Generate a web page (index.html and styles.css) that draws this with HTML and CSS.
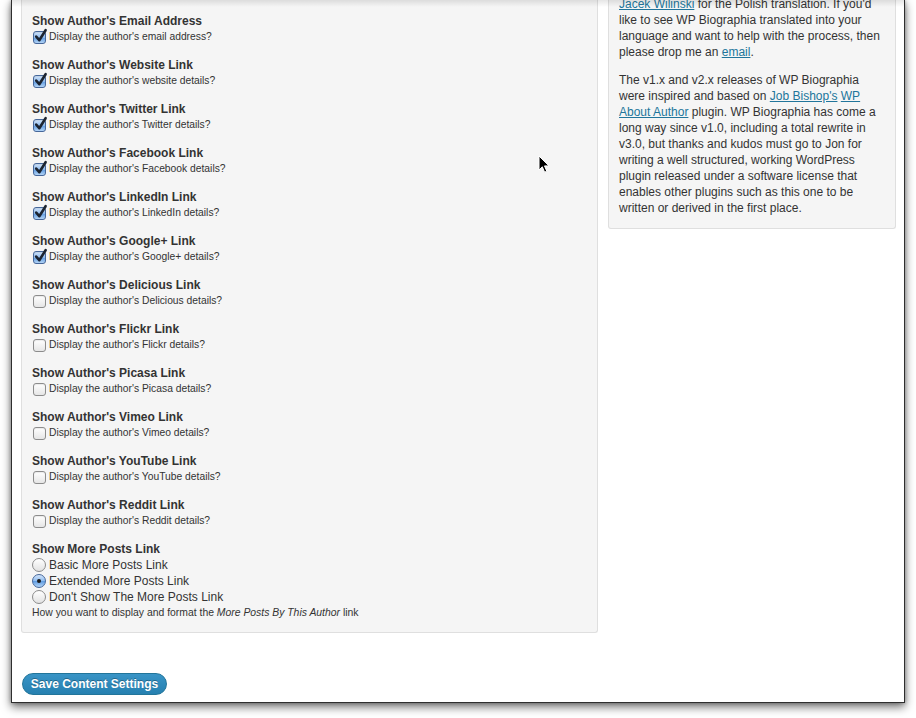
FILE: index.html
```html
<!DOCTYPE html>
<html>
<head>
<meta charset="utf-8">
<link rel="stylesheet" href="styles.css">
</head>
<body>
<div class="desktop">
  <div class="window">
    <div class="columns">
      <div class="mainbox">
        <div class="field">
          <h4>Show Author's Email Address</h4>
          <label class="opt"><span class="cb on"><svg viewBox="0 0 15 16" width="15" height="16"><path d="M3.2 8.6 L6.3 12.2 L12.6 2.2" fill="none" stroke="#1c2430" stroke-width="2.6" stroke-linecap="round" stroke-linejoin="round"/></svg></span>Display the author's email address?</label>
        </div>
        <div class="field">
          <h4>Show Author's Website Link</h4>
          <label class="opt"><span class="cb on"><svg viewBox="0 0 15 16" width="15" height="16"><path d="M3.2 8.6 L6.3 12.2 L12.6 2.2" fill="none" stroke="#1c2430" stroke-width="2.6" stroke-linecap="round" stroke-linejoin="round"/></svg></span>Display the author's website details?</label>
        </div>
        <div class="field">
          <h4>Show Author's Twitter Link</h4>
          <label class="opt"><span class="cb on"><svg viewBox="0 0 15 16" width="15" height="16"><path d="M3.2 8.6 L6.3 12.2 L12.6 2.2" fill="none" stroke="#1c2430" stroke-width="2.6" stroke-linecap="round" stroke-linejoin="round"/></svg></span>Display the author's Twitter details?</label>
        </div>
        <div class="field">
          <h4>Show Author's Facebook Link</h4>
          <label class="opt"><span class="cb on"><svg viewBox="0 0 15 16" width="15" height="16"><path d="M3.2 8.6 L6.3 12.2 L12.6 2.2" fill="none" stroke="#1c2430" stroke-width="2.6" stroke-linecap="round" stroke-linejoin="round"/></svg></span>Display the author's Facebook details?</label>
        </div>
        <div class="field">
          <h4>Show Author's LinkedIn Link</h4>
          <label class="opt"><span class="cb on"><svg viewBox="0 0 15 16" width="15" height="16"><path d="M3.2 8.6 L6.3 12.2 L12.6 2.2" fill="none" stroke="#1c2430" stroke-width="2.6" stroke-linecap="round" stroke-linejoin="round"/></svg></span>Display the author's LinkedIn details?</label>
        </div>
        <div class="field">
          <h4>Show Author's Google+ Link</h4>
          <label class="opt"><span class="cb on"><svg viewBox="0 0 15 16" width="15" height="16"><path d="M3.2 8.6 L6.3 12.2 L12.6 2.2" fill="none" stroke="#1c2430" stroke-width="2.6" stroke-linecap="round" stroke-linejoin="round"/></svg></span>Display the author's Google+ details?</label>
        </div>
        <div class="field">
          <h4>Show Author's Delicious Link</h4>
          <label class="opt"><span class="cb"></span>Display the author's Delicious details?</label>
        </div>
        <div class="field">
          <h4>Show Author's Flickr Link</h4>
          <label class="opt"><span class="cb"></span>Display the author's Flickr details?</label>
        </div>
        <div class="field">
          <h4>Show Author's Picasa Link</h4>
          <label class="opt"><span class="cb"></span>Display the author's Picasa details?</label>
        </div>
        <div class="field">
          <h4>Show Author's Vimeo Link</h4>
          <label class="opt"><span class="cb"></span>Display the author's Vimeo details?</label>
        </div>
        <div class="field">
          <h4>Show Author's YouTube Link</h4>
          <label class="opt"><span class="cb"></span>Display the author's YouTube details?</label>
        </div>
        <div class="field">
          <h4>Show Author's Reddit Link</h4>
          <label class="opt"><span class="cb"></span>Display the author's Reddit details?</label>
        </div>
        <div class="field last">
          <h4>Show More Posts Link</h4>
          <label class="opt radio-row"><span class="rb"></span>Basic More Posts Link</label>
          <label class="opt radio-row"><span class="rb on"></span>Extended More Posts Link</label>
          <label class="opt radio-row"><span class="rb"></span>Don't Show The More Posts Link</label>
          <div class="help">How you want to display and format the <em>More Posts By This Author</em> link</div>
        </div>
      </div>
      <div class="sidebox">
        <p class="first"><a href="#">Jacek Wilinski</a> for the Polish translation. If you'd like to see WP Biographia translated into your language and want to help with the process, then please drop me an <a href="#">email</a>.</p>
        <p>The v1.x and v2.x releases of WP Biographia were inspired and based on <a href="#">Job Bishop's</a> <a href="#">WP About Author</a> plugin. WP Biographia has come a long way since v1.0, including a total rewrite in v3.0, but thanks and kudos must go to Jon for writing a well structured, working WordPress plugin released under a software license that enables other plugins such as this one to be written or derived in the first place.</p>
      </div>
    </div>
    <div class="actions">
      <button class="save">Save Content Settings</button>
    </div>
    <svg class="cursor" width="12" height="19" viewBox="0 0 12 19"><path d="M1 1 L1 15 L4.3 11.8 L6.6 17.2 L8.8 16.2 L6.5 10.9 L11 10.9 Z" fill="#000" stroke="#fff" stroke-width="1"/></svg>
    <div class="topshade"></div>
  </div>
</div>
</body>
</html>
```

FILE: styles.css
```css
html, body {
  margin: 0;
  padding: 0;
  background: #ffffff;
}

.desktop {
  width: 916px;
  height: 718px;
  padding-left: 11px;
  box-sizing: border-box;
  overflow: hidden;
}

.window {
  position: relative;
  width: 894px;
  height: 703px;
  box-sizing: border-box;
  border: 1px solid #2e2e2e;
  border-top: none;
  background: #ffffff;
  overflow: hidden;
  box-shadow: 0 4px 9px rgba(0, 0, 0, 0.55), 0 0 4px rgba(0, 0, 0, 0.3);
  font-family: "Liberation Sans", Arial, sans-serif;
  color: #333333;
}

.topshade {
  position: absolute;
  left: 0;
  right: 0;
  top: 0;
  height: 7px;
  background: linear-gradient(to bottom, rgba(0,0,0,0.10), rgba(0,0,0,0));
  pointer-events: none;
}

.columns {
  display: flex;
  align-items: flex-start;
  gap: 10px;
  padding: 0 8px 0 9px;
}

.mainbox {
  width: 577px;
  box-sizing: border-box;
  background: #f5f5f5;
  border: 1px solid #dfdfdf;
  border-top: none;
  border-radius: 0 0 3px 3px;
  padding: 13px 10px 11px 10px;
}

.field {
  margin-bottom: 12px;
}

.field.last {
  margin-bottom: 0;
}

.field h4 {
  margin: 0;
  font-size: 12px;
  line-height: 16px;
  font-weight: bold;
  color: #333333;
}

.opt {
  display: flex;
  align-items: center;
  height: 16px;
  font-size: 10.3px;
  line-height: 16px;
  color: #333333;
}

.radio-row {
  font-size: 12px;
}

.cb {
  position: relative;
  width: 11px;
  height: 11px;
  margin: 1px 3px 0 1px;
  border: 1px solid #8c8c8c;
  border-radius: 3px;
  background: linear-gradient(to bottom, #ffffff, #e6e6e6);
  box-shadow: inset 0 1px 1px rgba(0,0,0,0.08);
  flex: none;
}

.cb.on {
  border-color: #46679a;
  background: linear-gradient(to bottom, #d3e5fb 0%, #8fbcef 50%, #5d9ae0 51%, #b3d4f6 100%);
}

.cb svg {
  position: absolute;
  left: -1px;
  top: -4px;
}

.rb {
  position: relative;
  width: 12px;
  height: 12px;
  margin: 0 3px 0 0;
  border: 1px solid #8c8c8c;
  border-radius: 50%;
  background: linear-gradient(to bottom, #ffffff, #e2e2e2);
  flex: none;
}

.rb.on {
  border-color: #46679a;
  background: linear-gradient(to bottom, #d3e5fb 0%, #8fbcef 50%, #5d9ae0 51%, #b3d4f6 100%);
}

.rb.on::after {
  content: "";
  position: absolute;
  left: 4px;
  top: 4px;
  width: 4px;
  height: 4px;
  border-radius: 50%;
  background: #1a1a1a;
}

.help {
  font-size: 10.4px;
  line-height: 16px;
  color: #333333;
}

.sidebox {
  width: 288px;
  box-sizing: border-box;
  background: #f5f5f5;
  border: 1px solid #dfdfdf;
  border-top: none;
  border-radius: 0 0 3px 3px;
  padding: 0 10px;
  font-size: 12px;
  line-height: 16px;
}

.sidebox p {
  margin: 12px 0;
}

.sidebox p.first {
  margin-top: -4px;
}

.sidebox a {
  color: #21759b;
  text-decoration: underline;
}

.actions {
  padding: 40px 0 0 10px;
}

.save {
  font-family: "Liberation Sans", Arial, sans-serif;
  font-size: 12px;
  font-weight: bold;
  color: #ffffff;
  height: 22px;
  width: 145px;
  padding: 0;
  border: 1px solid #22759a;
  border-radius: 11px;
  background: linear-gradient(to bottom, #3994c6, #2680b0);
  text-shadow: 0 -1px 0 rgba(0,0,0,0.3);
}

.cursor {
  position: absolute;
  left: 526px;
  top: 155px;
}
```
